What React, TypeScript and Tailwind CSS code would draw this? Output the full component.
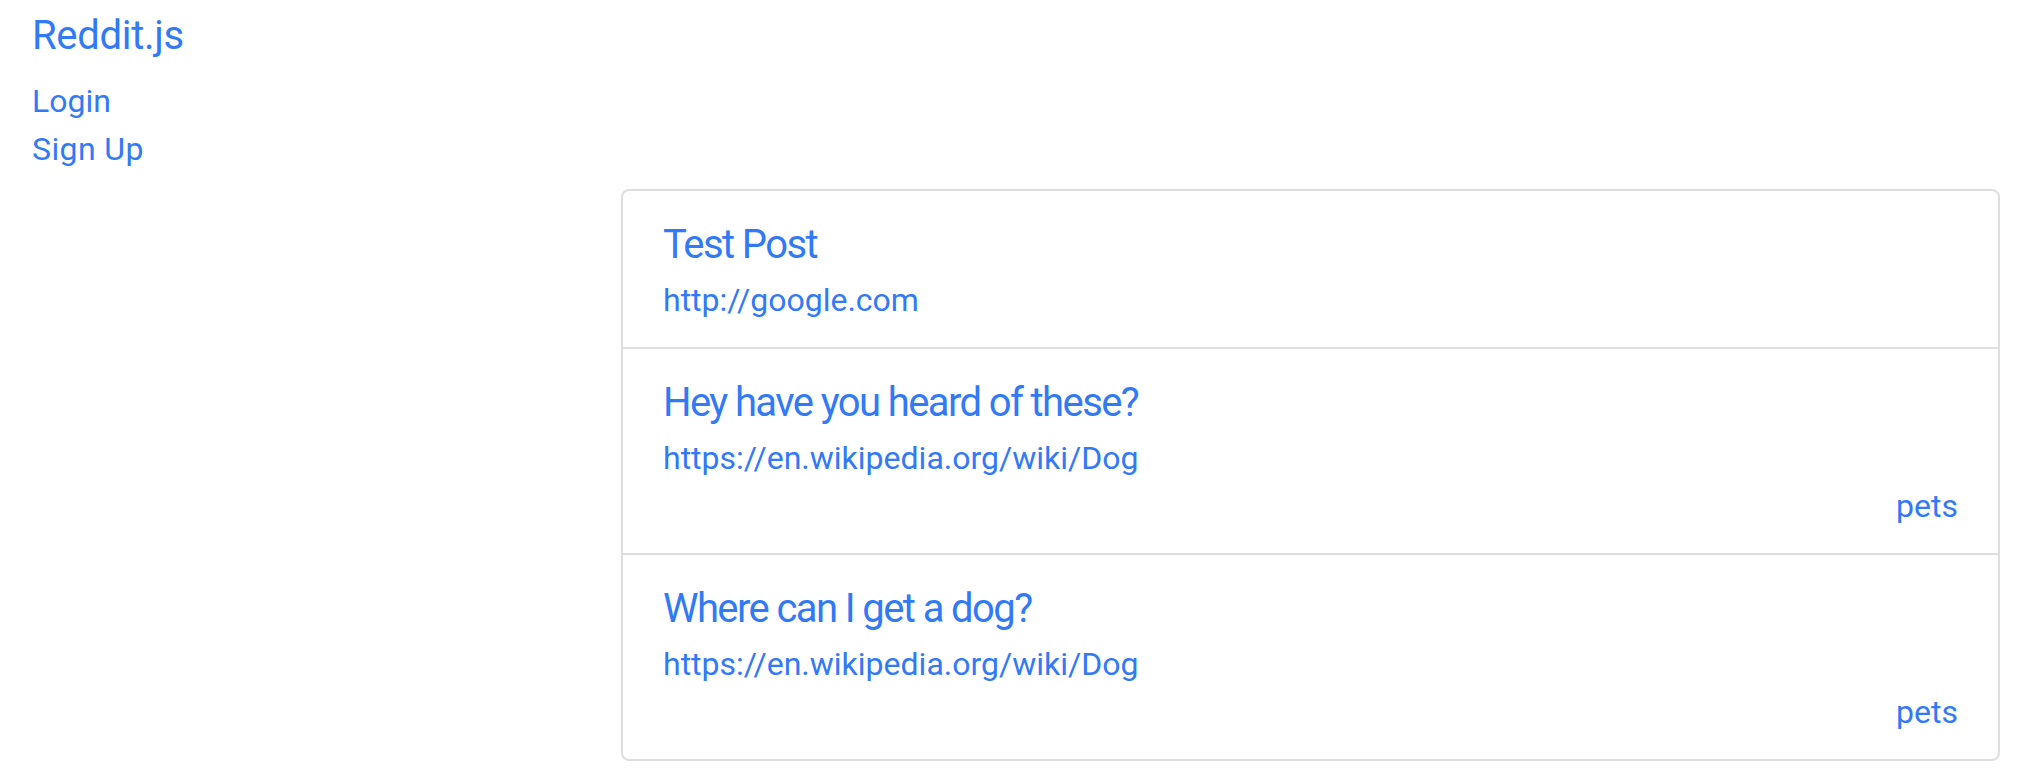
const posts = [
  { title: "Test Post", url: "http://google.com", sub: "" },
  { title: "Hey have you heard of these?", url: "https://en.wikipedia.org/wiki/Dog", sub: "pets" },
  { title: "Where can I get a dog?", url: "https://en.wikipedia.org/wiki/Dog", sub: "pets" },
];

function App() {
  return (
    <div className="min-h-[784px] bg-white font-['Roboto','Liberation_Sans',sans-serif] text-[#3279f6]">
      {/* Nav */}
      <nav className="flex flex-col px-[32px] pt-[12px]">
        <a className="text-[40px] leading-[48px] tracking-[-0.3px]">Reddit.js</a>
        <div className="mt-[17px] flex flex-col text-[32px] leading-[48px]">
          <a>Login</a>
          <a className="tracking-[0.4px]">Sign Up</a>
        </div>
      </nav>

      {/* Posts */}
      <div className="mt-[16px] flex justify-end pr-[32px]">
        <ul className="w-[1379px] rounded-[8px] border-2 border-[#dedede]">
          {posts.map((post, i) => (
            <li
              key={i}
              className={`px-[40px] pt-[30px] pb-[23px] ${i > 0 ? "border-t-2 border-[#dedede]" : ""}`}
            >
              <h5 className="text-[40px] leading-[48px] tracking-[-1.6px]">{post.title}</h5>
              <p className="mt-[7px] text-[32px] leading-[48px]">{post.url}</p>
              {post.sub && (
                <p className="text-right text-[32px] leading-[48px]">{post.sub}</p>
              )}
            </li>
          ))}
        </ul>
      </div>
    </div>
  );
}

export default App;
